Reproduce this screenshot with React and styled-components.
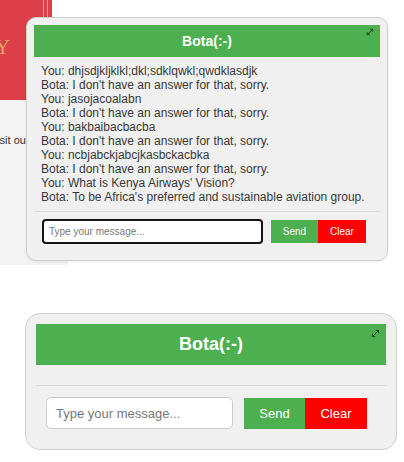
import React from 'react';
import styled, { createGlobalStyle, css } from 'styled-components';

const GlobalStyle = createGlobalStyle`
  html, body {
    margin: 0;
    padding: 0;
    background: #fff;
  }
  body {
    width: 404px;
    height: 462px;
    overflow: hidden;
    font-family: "Liberation Sans", Arial, sans-serif;
  }
`;

const MESSAGES = [
	'You: dhjsdjkljklkl;dkl;sdklqwkl;qwdklasdjk',
	"Bota: I don't have an answer for that, sorry.",
	'You: jasojacoalabn',
	"Bota: I don't have an answer for that, sorry.",
	'You: bakbaibacbacba',
	"Bota: I don't have an answer for that, sorry.",
	'You: ncbjabckjabcjkasbckacbka',
	"Bota: I don't have an answer for that, sorry.",
	"You: What is Kenya Airways' Vision?",
	"Bota: To be Africa's preferred and sustainable aviation group.",
];

const Page = styled.div`
	display: flex;
	flex-direction: column;
`;

/* the page behind the floating chat */
const TopShot = styled.div`
	position: relative;
	height: 265px;
`;

const Backdrop = styled.div`
	display: flex;
	flex-direction: column;
	align-items: flex-start;
`;

const Hero = styled.div`
	width: 52px;
	height: 100px;
	overflow: hidden;
	background:
		linear-gradient(to right,
			transparent 43px, #e8a766 43px, #e8a766 44px, transparent 44px,
			transparent 47px, #e8a766 47px, #e8a766 48px, transparent 48px),
		#dc3f47;
`;

const HeroLetter = styled.div`
	font-family: "Liberation Serif", "Times New Roman", serif;
	font-size: 21px;
	line-height: 1;
	color: #e8a766;
	padding-top: 37px;
	margin-left: -5px;
`;

const Aside = styled.div`
	width: 68px;
	height: 165px;
	background: #f3f3f3;
	overflow: hidden;
	white-space: nowrap;
`;

const AsideText = styled.div`
	font-size: 11px;
	color: #333;
	margin-top: 34px;
	margin-left: -10px;
`;

const Panel = styled.div`
	box-sizing: border-box;
	background: #f0f0f0;
	border: 1px solid #cfcfcf;
	${p => p.$large ? css`
		width: 372px;
		padding: 10px 10px 20px;
		border-radius: 15px;
	` : css`
		position: absolute;
		left: 26px;
		top: 17px;
		width: 362px;
		padding: 7px 7px 16px;
		border-radius: 10px;
		box-shadow: 0 1px 3px rgba(0, 0, 0, 0.08);
	`}
`;

const Header = styled.div`
	position: relative;
	display: flex;
	align-items: center;
	justify-content: center;
	background: #4caf50;
	color: #fff;
	font-weight: bold;
	height: ${p => p.$large ? 41 : 32}px;
	font-size: ${p => p.$large ? 18 : 14}px;
`;

const Expand = styled.svg`
	position: absolute;
	right: 6px;
	top: ${p => p.$large ? 5 : 3}px;
	width: ${p => p.$large ? 9 : 8}px;
	height: ${p => p.$large ? 9 : 8}px;
`;

const Messages = styled.div`
	font-size: 12px;
	line-height: 14px;
	color: #383838;
	padding: 7px 0 7px 7px;
	${p => p.$large && css`
		padding: 0;
		height: 20px;
	`}
`;

const Divider = styled.div`
	height: 1px;
	background: #d9d9d9;
`;

const InputRow = styled.div`
	display: flex;
	align-items: center;
	margin-top: ${p => p.$large ? 11 : 7}px;
	padding-left: ${p => p.$large ? 10 : 8}px;
	gap: ${p => p.$large ? 11 : 8}px;
`;

const Field = styled.input`
	box-sizing: border-box;
	font-family: "Liberation Sans", Arial, sans-serif;
	background: #fff;
	outline: none;
	${p => p.$large ? css`
		width: 187px;
		height: 32px;
		border: 1px solid #ccc;
		border-radius: 5px;
		padding: 0 9px;
		font-size: 13px;
	` : css`
		width: 221px;
		height: 25px;
		border: 2px solid #141414;
		border-radius: 4px;
		padding: 0 5px;
		font-size: 10px;
	`}
	&::placeholder {
		color: #777;
	}
`;

const Buttons = styled.div`
	display: flex;
`;

const Button = styled.button`
	border: none;
	color: #fff;
	font-family: "Liberation Sans", Arial, sans-serif;
	padding: 0;
	background: ${p => p.$red ? '#ff0000' : '#4caf50'};
	height: ${p => p.$large ? 31 : 23}px;
	font-size: ${p => p.$large ? 13 : 10}px;
	width: ${p => p.$large ? (p.$red ? 62 : 61) : (p.$red ? 48 : 47)}px;
`;

const BottomShot = styled.div`
	padding: 48px 0 0 25px;
`;

function ExpandIcon({ large }) {
	return (
		<Expand $large={large} viewBox="0 0 10 10" fill="none" stroke="#1e3a1e" strokeWidth="1.1">
			<path d="M1.5 8.5 L8.5 1.5" />
			<path d="M5.2 1.5 H8.5 V4.8" />
			<path d="M1.5 5.2 V8.5 H4.8" />
		</Expand>
	);
}

function ChatBox({ large, messages }) {
	return (
		<Panel $large={large}>
			<Header $large={large}>
				Bota(:-)
				<ExpandIcon large={large} />
			</Header>
			<Messages $large={large}>
				{messages.map((m, i) => <div key={i}>{m}</div>)}
			</Messages>
			<Divider />
			<InputRow $large={large}>
				<Field $large={large} type="text" placeholder="Type your message..." />
				<Buttons>
					<Button $large={large}>Send</Button>
					<Button $large={large} $red>Clear</Button>
				</Buttons>
			</InputRow>
		</Panel>
	);
}

export default function App() {
	return (
		<Page>
			<GlobalStyle />
			<TopShot>
				<Backdrop>
					<Hero>
						<HeroLetter>Y</HeroLetter>
					</Hero>
					<Aside>
						<AsideText>Visit our website</AsideText>
					</Aside>
				</Backdrop>
				<ChatBox messages={MESSAGES} />
			</TopShot>
			<BottomShot>
				<ChatBox large messages={[]} />
			</BottomShot>
		</Page>
	);
}
